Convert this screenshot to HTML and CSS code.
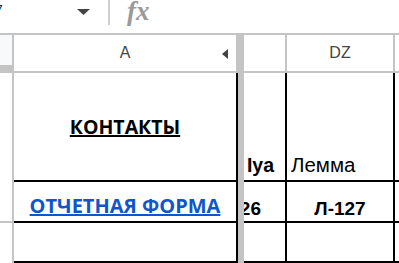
FILE: index.html
```html
<!DOCTYPE html>
<html lang="ru">
<head>
    <meta charset="UTF-8">
    <title>Таблица</title>
    <link rel="stylesheet" href="styles.css">
</head>
<body>
    <div class="toolbar">
        <div class="namebox">
            <span class="ref">7</span>
            <svg class="caret" width="13" height="6" viewBox="0 0 13 6"><path d="M0 0H13L6.5 6Z" fill="#444"/></svg>
        </div>
        <div class="sep"></div>
        <div class="fx">fx</div>
    </div>
    <div class="sheet">
        <!-- header -->
        <div class="hd corner"></div>
        <div class="hd col">A<svg class="arrow" width="6" height="10" viewBox="0 0 6 10"><path d="M6 0V10L0 5Z" fill="#444"/></svg></div>
        <div class="freeze hd-freeze"></div>
        <div class="hd col line"></div>
        <div class="hd col line">DZ</div>
        <div class="hd col"></div>

        <!-- row 1 -->
        <div class="rh"></div>
        <div class="cell mid title">КОНТАКТЫ</div>
        <div class="freeze"></div>
        <div class="cell dy line bold pr-12"><span>Iya</span></div>
        <div class="cell line plain">Лемма</div>
        <div class="cell"></div>

        <!-- row 2 -->
        <div class="rh rh-line"></div>
        <div class="cell center-bottom link">ОТЧЕТНАЯ ФОРМА</div>
        <div class="freeze"></div>
        <div class="cell dy line bold pr-24"><span>Л-126</span></div>
        <div class="cell line bold center-bottom">Л-127</div>
        <div class="cell"></div>

        <!-- row 3 -->
        <div class="rh"></div>
        <div class="cell"></div>
        <div class="freeze"></div>
        <div class="cell line"></div>
        <div class="cell line"></div>
        <div class="cell"></div>
    </div>
</body>
</html>
```

FILE: styles.css
```css
* {
    box-sizing: border-box;
}
body {
    margin: 0;
    width: 399px;
    height: 263px;
    overflow: hidden;
    background: #fff;
    font-family: "Liberation Sans", Arial, sans-serif;
    font-synthesis: none;
    color: #000;
}

/* formula bar */
.toolbar {
    display: flex;
    align-items: flex-start;
    height: 35px;
    border-bottom: 2px solid #c4c4c4;
}
.namebox {
    display: flex;
    align-items: flex-start;
    width: 108px;
    height: 25px;
    overflow: hidden;
}
.ref {
    margin-left: -5px;
    margin-top: 2px;
    font-size: 14px;
    line-height: 16px;
    color: #202124;
}
.caret {
    margin-left: auto;
    margin-right: 18px;
    margin-top: 9px;
}
.sep {
    width: 2px;
    height: 25px;
    background: #d0d0d0;
}
.fx {
    margin-left: 17px;
    margin-top: -4px;
    font-family: "Liberation Serif", serif;
    font-style: italic;
    font-weight: bold;
    font-size: 27px;
    color: #9a9a9a;
}

/* grid */
.sheet {
    display: grid;
    grid-template-columns: 14px 222px 8px 43px 108px 1fr;
    grid-template-rows: 38px 109px 41px 40px;
}
.hd {
    border-bottom: 2px solid #c4c4c4;
    background: #fff;
}
.corner {
    background: #f8f9fa;
    border-right: 2px solid #c4c4c4;
    border-bottom: 8px solid #c4c4c4;
}
.col {
    position: relative;
    display: flex;
    align-items: center;
    justify-content: center;
    font-size: 16px;
    color: #444;
}
.arrow {
    position: absolute;
    right: 8px;
    top: 14px;
}
.hd.line {
    border-right: 2px solid #c4c4c4;
}
.freeze {
    background: #c4c4c4;
}
.freeze:not(.hd-freeze) {
    border-left: 2px solid #000;
}
.rh {
    border-right: 2px solid #c4c4c4;
}
.rh-line {
    border-bottom: 2px solid #c4c4c4;
}
.cell {
    display: flex;
    overflow: hidden;
    white-space: nowrap;
    border-bottom: 2px solid #000;
}
.cell.line {
    border-right: 2px solid #000;
}
.mid {
    align-items: center;
    justify-content: center;
}
.title {
    font-family: "Open Sans", sans-serif;
    font-weight: bold;
    font-size: 19.5px;
    text-decoration: underline;
    text-decoration-thickness: 2px;
}
.center-bottom {
    align-items: flex-end;
    justify-content: center;
    padding-bottom: 1px;
}
.link {
    font-family: "Open Sans", sans-serif;
    font-weight: bold;
    font-size: 20px;
    color: #1155cc;
    text-decoration: underline;
    text-decoration-thickness: 2px;
    padding-bottom: 2px;
}
.bold {
    font-weight: bold;
    font-size: 19px;
}
.dy {
    align-items: flex-end;
    justify-content: flex-end;
    padding-bottom: 3px;
}
.dy.pr-12 {
    padding-right: 11px;
    font-size: 19.5px;
}
.dy.pr-24 {
    padding-right: 24px;
    padding-bottom: 1px;
}
.plain {
    align-items: flex-end;
    padding-left: 4px;
    padding-bottom: 3px;
    font-size: 20.5px;
}
```
